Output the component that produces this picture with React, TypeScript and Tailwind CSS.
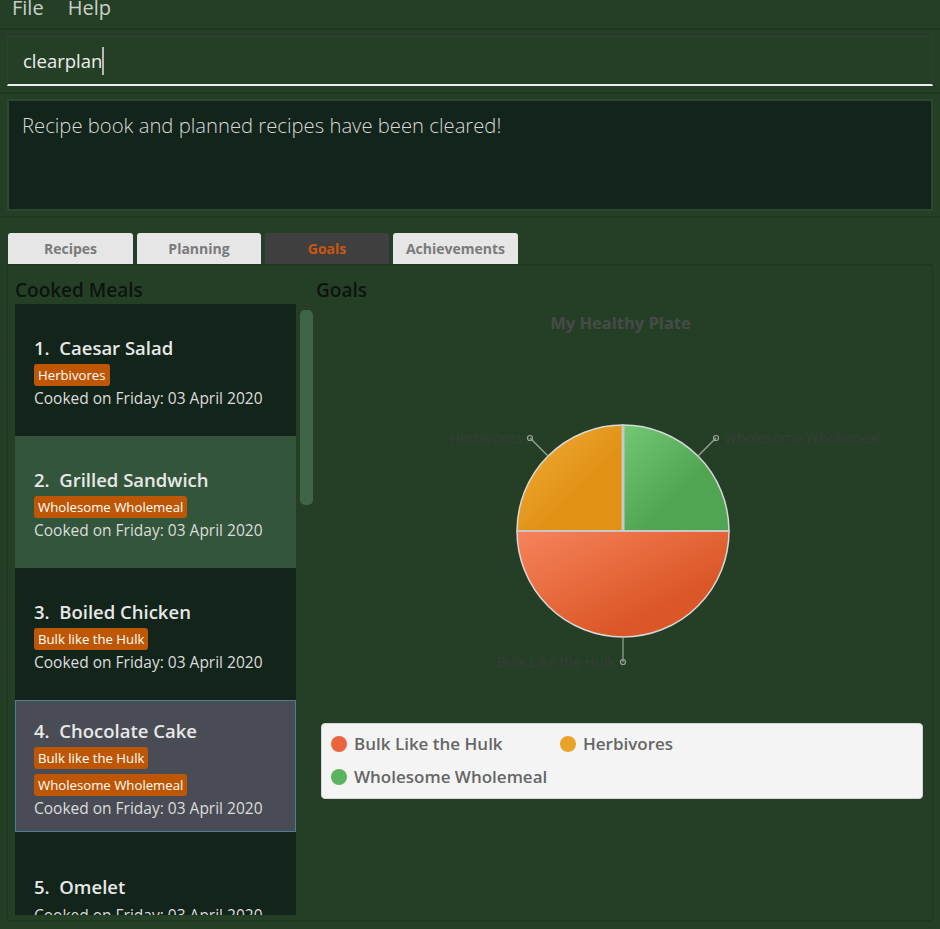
import React from 'react';

const font = { fontFamily: '"Open Sans", "Noto Sans", sans-serif' };

interface Meal { n: number; name: string; tags: string[]; tone: 'dark' | 'green' | 'slate'; }

const meals: Meal[] = [
  { n: 1, name: 'Caesar Salad', tags: ['Herbivores'], tone: 'dark' },
  { n: 2, name: 'Grilled Sandwich', tags: ['Wholesome Wholemeal'], tone: 'green' },
  { n: 3, name: 'Boiled Chicken', tags: ['Bulk like the Hulk'], tone: 'dark' },
  { n: 4, name: 'Chocolate Cake', tags: ['Bulk like the Hulk', 'Wholesome Wholemeal'], tone: 'slate' },
  { n: 5, name: 'Omelet', tags: [], tone: 'dark' },
];

const toneClass = {
  dark: 'bg-[#13241a] border-transparent',
  green: 'bg-[#33553b] border-transparent',
  slate: 'bg-[#494c55] border-[#4a7f94]',
};

function MealCard({ m }: { m: Meal }) {
  return (
    <div className={`h-[132px] shrink-0 border flex flex-col justify-center px-[18px] pt-[4px] ${toneClass[m.tone]}`}>
      <div className="text-[18.5px] font-semibold leading-[24px] text-[#e8e8e8]">
        {m.n}.&nbsp;&nbsp;{m.name}
      </div>
      <div className="flex flex-col items-start gap-[5px] mt-[4px]">
        {m.tags.map((t, i) => (
          <span key={i} className="bg-[#bd5705] text-white text-[13.2px] leading-[22px] h-[22px] px-[4px] rounded-[3px]">
            {t}
          </span>
        ))}
      </div>
      <div className="text-[15.5px] leading-[20px] text-[#dcdcdc] mt-[2px]">Cooked on Friday: 03 April 2020</div>
    </div>
  );
}

function Pie() {
  const cx = 307, cy = 185, r = 106;
  return (
    <svg width="614" height="340" className="block">
      <defs>
        <linearGradient id="gG" x1="0" y1="0" x2="1" y2="1">
          <stop offset="0" stopColor="#72c875" />
          <stop offset="0.6" stopColor="#50a553" />
        </linearGradient>
        <linearGradient id="gO" x1="0" y1="0" x2="1" y2="1">
          <stop offset="0" stopColor="#f2ad3a" />
          <stop offset="0.6" stopColor="#e19216" />
        </linearGradient>
        <linearGradient id="gR" x1="0" y1="0" x2="1" y2="1">
          <stop offset="0" stopColor="#f7835c" />
          <stop offset="0.7" stopColor="#db5727" />
        </linearGradient>
      </defs>
      <path d={`M${cx} ${cy} L${cx} ${cy - r} A${r} ${r} 0 0 1 ${cx + r} ${cy} Z`} fill="url(#gG)" stroke="#d8d8d8" strokeWidth="1.5" />
      <path d={`M${cx} ${cy} L${cx - r} ${cy} A${r} ${r} 0 0 1 ${cx} ${cy - r} Z`} fill="url(#gO)" stroke="#d8d8d8" strokeWidth="1.5" />
      <path d={`M${cx} ${cy} L${cx + r} ${cy} A${r} ${r} 0 0 1 ${cx - r} ${cy} Z`} fill="url(#gR)" stroke="#d8d8d8" strokeWidth="1.5" />
      <line x1={cx} y1={cy - r} x2={cx} y2={cy} stroke="#c8c8c8" strokeWidth="3" />
      <line x1={cx - r} y1={cy} x2={cx + r} y2={cy} stroke="#c8c8c8" strokeWidth="2" />

      <g stroke="#9aa59a" strokeWidth="1.2" fill="none">
        <line x1="232" y1="110" x2="214" y2="92" />
        <circle cx="214" cy="92" r="2.5" />
        <line x1="382" y1="110" x2="400" y2="92" />
        <circle cx="400" cy="92" r="2.5" />
        <line x1={cx} y1={cy + r} x2={cx} y2="316" />
        <circle cx={cx} cy="316" r="2.5" />
      </g>
      <g fill="#373d37" fontSize="14.2" style={font}>
        <text x="206" y="97" textAnchor="end">Herbivores</text>
        <text x="408" y="97">Wholesome Wholemeal</text>
        <text x="299" y="321" textAnchor="end">Bulk Like the Hulk</text>
      </g>
    </svg>
  );
}

function Legend() {
  const items = [
    { c: 'bg-[#e8653f]', t: 'Bulk Like the Hulk' },
    { c: 'bg-[#e9a22a]', t: 'Herbivores' },
    { c: 'bg-[#5cb35f]', t: 'Wholesome Wholemeal' },
  ];
  return (
    <div className="ml-[5px] w-[602px] h-[76px] bg-[#f4f4f4] rounded-[4px] border border-[#d6d6d6] pl-[9px] pt-[9px] grid grid-cols-[229px_229px] content-start gap-y-[11px]">
      {items.map((it, i) => (
        <div key={i} className="flex items-center gap-[7px] h-[22px]">
          <span className={`w-[16px] h-[16px] rounded-full ${it.c}`} />
          <span className="text-[17px] font-semibold text-[#666666]">{it.t}</span>
        </div>
      ))}
    </div>
  );
}

const tabs = [
  { t: 'Recipes', w: 'w-[125px]' },
  { t: 'Planning', w: 'w-[124px]' },
  { t: 'Goals', w: 'w-[124px]' },
  { t: 'Achievements', w: 'w-[125px]' },
];

export default function App() {
  return (
    <div className="w-[940px] h-[929px] bg-[#253f27] flex flex-col overflow-hidden" style={font}>
      {/* menu */}
      <div className="h-[30px] shrink-0 flex items-start gap-[24px] pl-[12px] border-b-2 border-[#1f3621] overflow-hidden">
        <span className="text-[20px] leading-[20px] -mt-[2px] text-[#c9d1c9]">File</span>
        <span className="text-[20px] leading-[20px] -mt-[2px] text-[#c9d1c9]">Help</span>
      </div>

      {/* command box */}
      <div className="px-[7px] pt-[6px] pb-[6px] border-b-2 border-[#1f3621] shrink-0">
        <div className="h-[50px] border-t border-x border-[#363d37] border-b-2 border-b-[#eeeeee] flex items-center pl-[15px]">
          <span className="text-[18.5px] text-[#eeeeee]">clearplan</span>
          <span className="w-[2px] h-[28px] bg-[#b8b8b8]" />
        </div>
      </div>

      {/* result box */}
      <div className="px-[7px] pt-[5px] pb-[5px] border-b-2 border-[#1f3621] shrink-0">
        <div className="h-[112px] border-2 border-[#2c4630] bg-[#13241a] pl-[13px] pt-[11px]">
          <div className="text-[20.25px] font-light leading-[26px] text-[#d9d9d9]">Recipe book and planned recipes have been cleared!</div>
        </div>
      </div>

      {/* tabs */}
      <div className="flex-1 min-h-0 flex flex-col pt-[15px] px-[7px]">
        <div className="flex gap-[4px] pl-[1px] h-[31px] shrink-0">
          {tabs.map(({ t, w }) => (
            <div
              key={t}
              className={`${w} rounded-t-[3px] flex items-center justify-center text-[14px] font-bold ${
                t === 'Goals' ? 'bg-[#3f3f3f] text-[#cc560f]' : 'bg-[#e6e6e6] text-[#7a7a7a]'
              }`}
            >
              {t}
            </div>
          ))}
        </div>

        <div className="flex-1 min-h-0 border-t-2 border-x border-b-2 border-[#1f3621] flex mb-[7px] overflow-hidden">
          {/* cooked meals */}
          <div className="w-[308px] shrink-0 min-h-0 flex flex-col pl-[7px] pt-[12px] pb-[5px]">
            <div className="text-[19px] font-semibold leading-[24px] text-[#0c140c] mb-[2px]">Cooked Meals</div>
            <div className="flex-1 min-h-0 flex gap-[4px] overflow-hidden">
              <div className="w-[281px] flex flex-col overflow-hidden">
                {meals.map((m) => (
                  <MealCard key={m.n} m={m} />
                ))}
              </div>
              <div className="pt-[6px]">
                <div className="w-[13px] h-[195px] rounded-[5px] bg-[#3f6547]" />
              </div>
            </div>
          </div>

          {/* goals */}
          <div className="flex-1 flex flex-col pt-[12px]">
            <div className="text-[19px] font-semibold leading-[24px] text-[#0c140c]">Goals</div>
            <div className="text-center text-[16.5px] font-bold text-[#474b47] mt-[9px] pr-[7px]">My Healthy Plate</div>
            <div className="mt-[10px]">
              <Pie />
            </div>
            <div className="mt-[37px]">
              <Legend />
            </div>
          </div>
        </div>
      </div>
    </div>
  );
}
